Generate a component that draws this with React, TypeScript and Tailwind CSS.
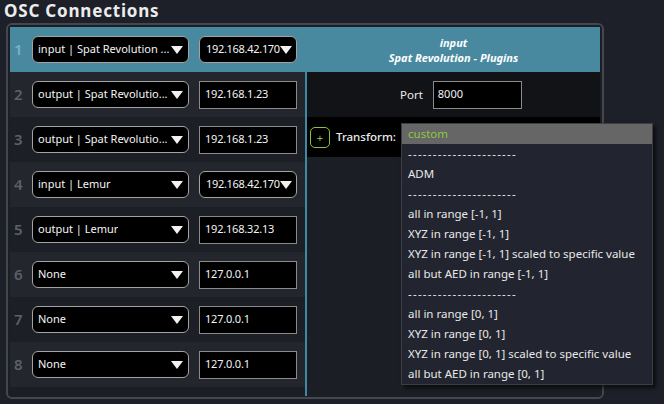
import React from 'react';

const font = { fontFamily: '"Noto Sans", "Open Sans", sans-serif' };

type Row = { kind: string; ip: string; ipSelect?: boolean };

const rows: Row[] = [
  { kind: 'input | Spat Revolution ...', ip: '192.168.42.170', ipSelect: true },
  { kind: 'output | Spat Revolutio...', ip: '192.168.1.23' },
  { kind: 'output | Spat Revolutio...', ip: '192.168.1.23' },
  { kind: 'input | Lemur', ip: '192.168.42.170', ipSelect: true },
  { kind: 'output | Lemur', ip: '192.168.32.13' },
  { kind: 'None', ip: '127.0.0.1' },
  { kind: 'None', ip: '127.0.0.1' },
  { kind: 'None', ip: '127.0.0.1' },
];

const DASHES = '----------------------';

const menuItems = [
  DASHES,
  'ADM',
  DASHES,
  'all in range [-1, 1]',
  'XYZ in range [-1, 1]',
  'XYZ in range [-1, 1] scaled to specific value',
  'all but AED in range [-1, 1]',
  DASHES,
  'all in range [0, 1]',
  'XYZ in range [0, 1]',
  'XYZ in range [0, 1] scaled to specific value',
  'all but AED in range [0, 1]',
];

const Caret = () => (
  <svg width="12" height="8" viewBox="0 0 12 8" className="shrink-0">
    <path d="M0 0 H12 L6 8 Z" fill="#f2f2f2" />
  </svg>
);

const ConnectionRow: React.FC<{ row: Row; index: number }> = ({ row, index }) => {
  const first = index === 0;
  return (
    <div className="flex items-center h-[45px] w-[295px]">
      <div
        className={`w-[22px] pl-[4px] text-[15px] font-semibold ${first ? 'text-[#7fb0c0]' : 'text-[#5c6067]'}`}
      >
        {index + 1}
      </div>
      <div className="flex items-center justify-between w-[157px] h-[27px] rounded-[6px] border border-[#a3a3a3] bg-black pl-[5px] pr-[5px]">
        <span className="text-[11px] text-[#f4f4f4] whitespace-nowrap overflow-hidden">{row.kind}</span>
        <Caret />
      </div>
      {row.ipSelect ? (
        <div className="ml-[10px] flex items-center justify-between w-[98px] h-[27px] rounded-[6px] border border-[#a3a3a3] bg-black pl-[6px] pr-[5px]">
          <span className="text-[11px] text-[#f4f4f4] whitespace-nowrap tracking-[-0.3px]">{row.ip}</span>
          <Caret />
        </div>
      ) : (
        <div className="ml-[10px] flex items-center w-[98px] h-[28px] border border-[#8a8a8a] bg-black pl-[5px]">
          <span className="text-[11px] text-[#f4f4f4] whitespace-nowrap tracking-[-0.2px]">{row.ip}</span>
        </div>
      )}
    </div>
  );
};

export default function App() {
  return (
    <div className="w-[664px] h-[404px] bg-[#1d2028] overflow-hidden" style={font}>
      <div className="h-[23px] pl-[4px] text-[17px] font-bold tracking-[0.8px] text-[#ececec] leading-[22px]">
        OSC Connections
      </div>
      <div className="ml-[6px] w-[598px] h-[376px] rounded-[6px] border-2 border-[#44474e] bg-[#1b1e24] pt-[2px] pl-[2px]">
        {/* header row */}
        <div className="flex h-[45px] w-[590px] bg-[#4889a0]">
          <ConnectionRow row={rows[0]} index={0} />
          <div className="flex-1 flex flex-col items-center justify-center text-[11px] font-bold italic text-white leading-[15px] pl-[2px]">
            <span>input</span>
            <span>Spat Revolution - Plugins</span>
          </div>
        </div>
        <div className="flex w-[590px]">
          <div className="flex flex-col">
            {rows.slice(1).map((r, i) => (
              <div key={i} className={i % 2 === 0 ? 'bg-[#23262d]' : 'bg-[#1c1f25]'}>
                <ConnectionRow row={r} index={i + 1} />
              </div>
            ))}
          </div>
          <div className="flex-1 border-l-2 border-[#3f89a3] h-[324px] relative">
            <div className="flex items-center h-[45px] bg-[#121317] pl-[93px]">
              <span className="text-[11.5px] text-[#ececec]">Port</span>
              <div className="ml-[10px] flex items-center w-[89px] h-[28px] border border-[#8a8a8a] bg-black pl-[4px]">
                <span className="text-[11px] text-[#f4f4f4]">8000</span>
              </div>
            </div>
            <div className="flex items-center h-[40px] bg-black pl-[3px]">
              <div className="flex items-center justify-center w-[20px] h-[21px] rounded-[5px] border-[1.5px] border-[#8cc13c] text-[#8cc13c] text-[11px] leading-none">
                +
              </div>
              <span className="ml-[6px] text-[11.5px] font-medium text-[#ececec]">Transform:</span>
            </div>
            {/* open dropdown menu */}
            <div className="absolute left-[94px] top-[51px] w-[252px] border border-[#3b3e46] bg-[#22252f] shadow-[3px_3px_4px_rgba(0,0,0,0.6)] z-10">
              <div className="h-[20px] bg-[#666666] pl-[6px] text-[11.5px] text-[#8fc641] leading-[20px]">custom</div>
              {menuItems.map((m, i) => (
                <div
                  key={i}
                  className={`h-[20px] pl-[6px] text-[11.5px] text-[#e8e8e8] leading-[20px] whitespace-nowrap ${m === DASHES ? 'tracking-[1.25px]' : ''}`}
                >
                  {m}
                </div>
              ))}
            </div>
          </div>
        </div>
      </div>
    </div>
  );
}
